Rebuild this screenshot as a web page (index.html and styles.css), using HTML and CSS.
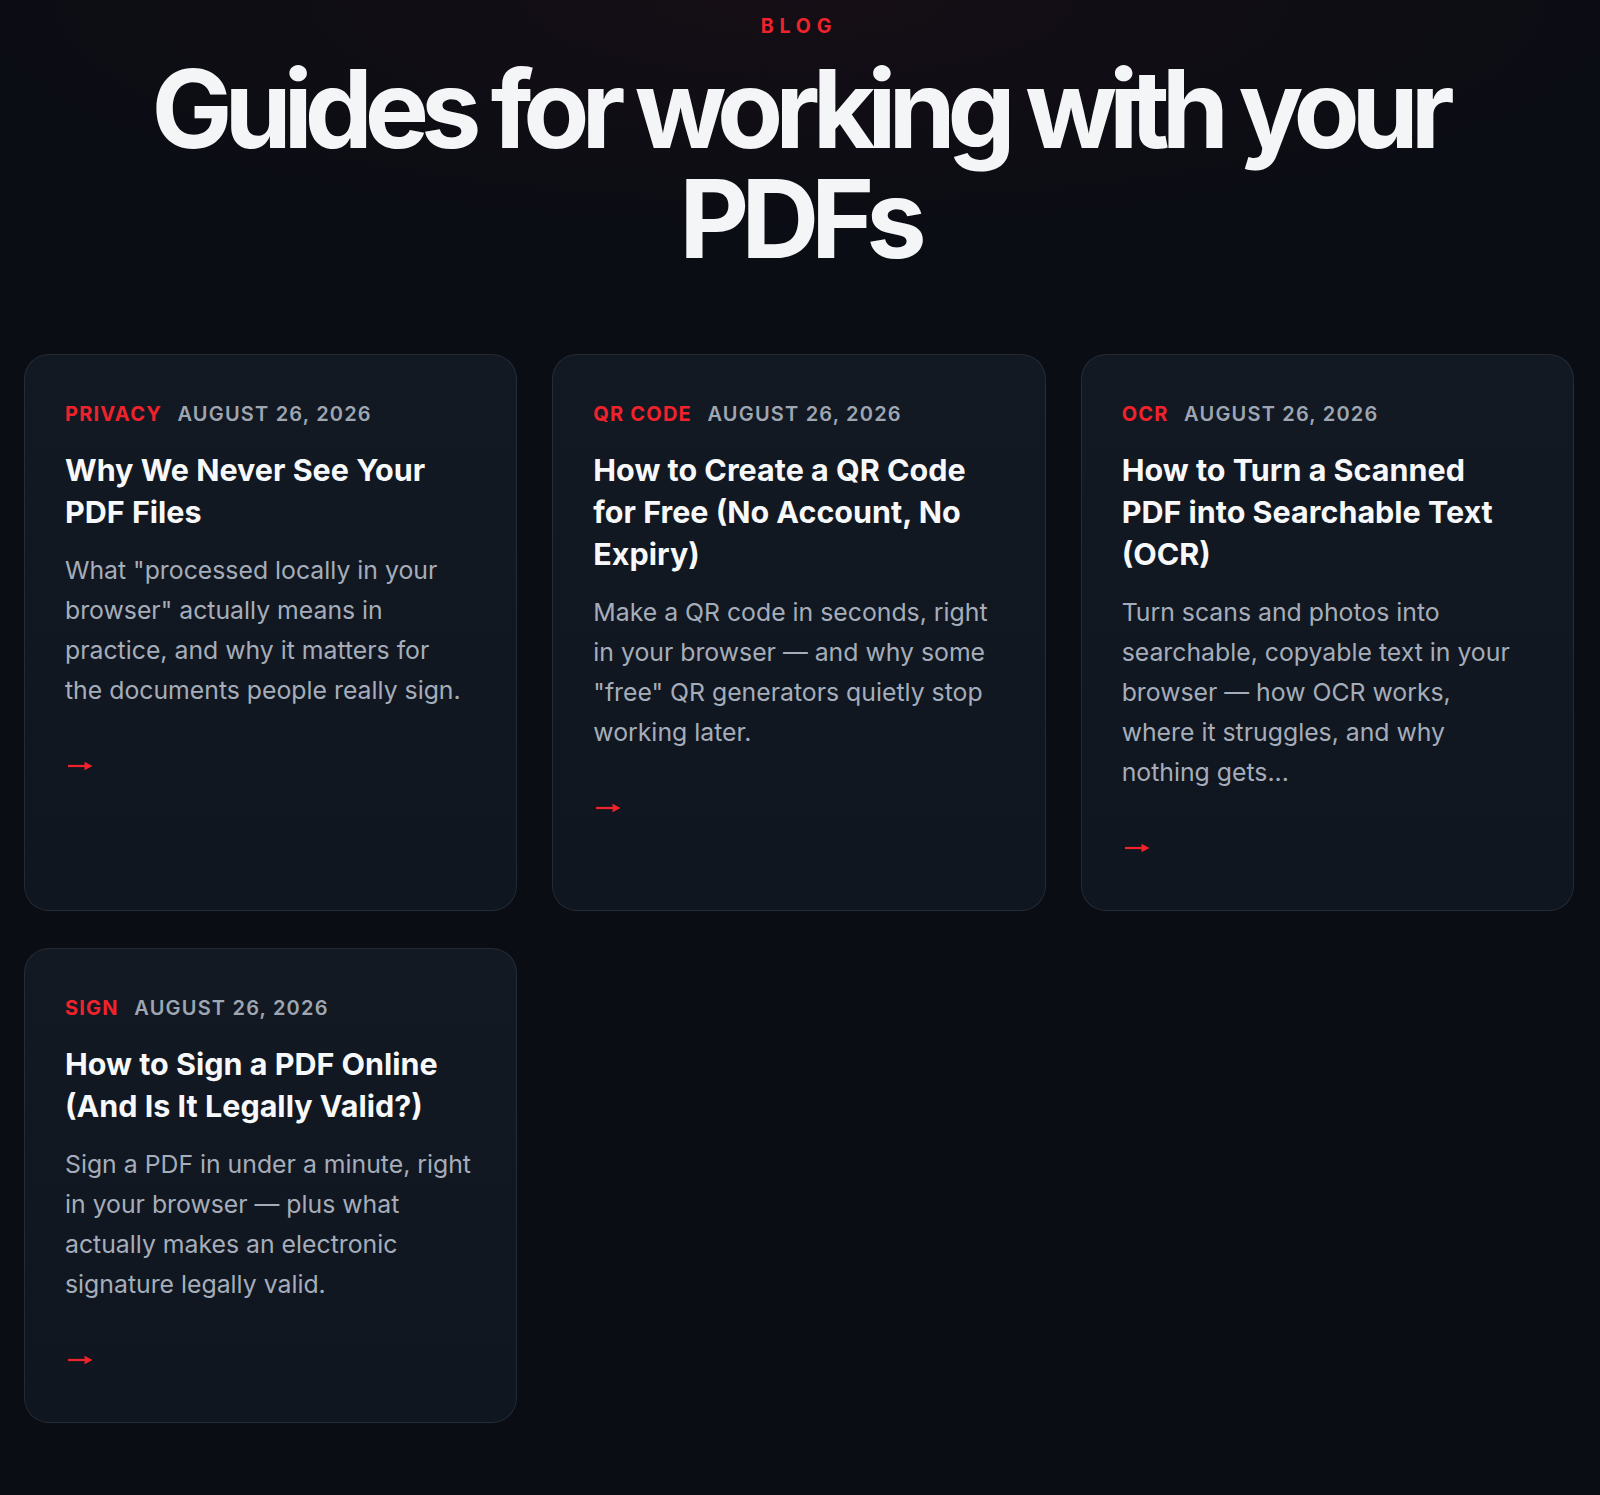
FILE: index.html
```html
<!DOCTYPE html>
<html lang="en">
<head>
<meta charset="utf-8">
<title>Blog — Guides for working with your PDFs</title>
<link rel="stylesheet" href="styles.css">
</head>
<body>
<main class="page">
  <header class="hero">
    <p class="eyebrow">Blog</p>
    <h1 class="hero-title">Guides for working with your PDFs</h1>
  </header>

  <section class="posts">
    <article class="card">
      <div class="meta"><span class="tag">Privacy</span><span class="date">August 26, 2026</span></div>
      <h2 class="card-title">Why We Never See Your PDF Files</h2>
      <p class="card-text">What "processed locally in your browser" actually means in practice, and why it matters for the documents people really sign.</p>
      <div class="more"><svg class="arrow" viewBox="0 0 25 12" width="25" height="12" aria-hidden="true"><path d="M0 6H19" stroke="currentColor" stroke-width="2.2" fill="none"/><path d="M16.5 1.8L24.5 6L16.5 10.2Z" fill="currentColor"/></svg></div>
    </article>

    <article class="card">
      <div class="meta"><span class="tag">QR Code</span><span class="date">August 26, 2026</span></div>
      <h2 class="card-title">How to Create a QR Code for Free (No Account, No Expiry)</h2>
      <p class="card-text">Make a QR code in seconds, right in your browser — and why some "free" QR generators quietly stop working later.</p>
      <div class="more"><svg class="arrow" viewBox="0 0 25 12" width="25" height="12" aria-hidden="true"><path d="M0 6H19" stroke="currentColor" stroke-width="2.2" fill="none"/><path d="M16.5 1.8L24.5 6L16.5 10.2Z" fill="currentColor"/></svg></div>
    </article>

    <article class="card">
      <div class="meta"><span class="tag">OCR</span><span class="date">August 26, 2026</span></div>
      <h2 class="card-title">How to Turn a Scanned PDF into Searchable Text (OCR)</h2>
      <p class="card-text">Turn scans and photos into searchable, copyable text in your browser — how OCR works, where it struggles, and why nothing gets...</p>
      <div class="more"><svg class="arrow" viewBox="0 0 25 12" width="25" height="12" aria-hidden="true"><path d="M0 6H19" stroke="currentColor" stroke-width="2.2" fill="none"/><path d="M16.5 1.8L24.5 6L16.5 10.2Z" fill="currentColor"/></svg></div>
    </article>

    <article class="card">
      <div class="meta"><span class="tag">Sign</span><span class="date">August 26, 2026</span></div>
      <h2 class="card-title">How to Sign a PDF Online (And Is It Legally Valid?)</h2>
      <p class="card-text">Sign a PDF in under a minute, right in your browser — plus what actually makes an electronic signature legally valid.</p>
      <div class="more"><svg class="arrow" viewBox="0 0 25 12" width="25" height="12" aria-hidden="true"><path d="M0 6H19" stroke="currentColor" stroke-width="2.2" fill="none"/><path d="M16.5 1.8L24.5 6L16.5 10.2Z" fill="currentColor"/></svg></div>
    </article>
  </section>
</main>
</body>
</html>
```

FILE: styles.css
```css
* { box-sizing: border-box; }

html, body {
  margin: 0;
  padding: 0;
}

body {
  min-height: 1495px;
  background-color: #0a0d14;
  background-image: radial-gradient(ellipse 60% 260px at 50% 0, rgba(120, 20, 30, 0.10), rgba(10, 13, 20, 0) 100%);
  background-repeat: no-repeat;
  color: #f4f5f7;
  font-family: Inter, "Noto Sans", "Liberation Sans", sans-serif;
}

.page {
  padding: 0 26px 72px 24px;
}

.hero {
  text-align: center;
  padding-top: 13px;
}

.eyebrow {
  margin: 0;
  font-size: 19.5px;
  line-height: 26px;
  font-weight: 700;
  letter-spacing: 0.3em;
  text-transform: uppercase;
  color: #f0222c;
}

.hero-title {
  margin: 15px auto 0;
  max-width: 1400px;
  font-size: 108px;
  line-height: 110px;
  font-weight: 700;
  letter-spacing: -0.075em;
  color: #f4f5f7;
}

.posts {
  margin-top: 80px;
  display: grid;
  grid-template-columns: repeat(3, 1fr);
  column-gap: 35px;
  row-gap: 37px;
  align-items: stretch;
}

.card {
  border: 1.25px solid rgba(255, 255, 255, 0.085);
  border-radius: 25px;
  background: linear-gradient(180deg, #131923 0%, #10161f 100%);
  padding: 40px;
}

.meta {
  margin-top: 6px;
  display: flex;
  gap: 15.5px;
  font-size: 20px;
  line-height: 26px;
  letter-spacing: 0.06em;
  text-transform: uppercase;
}

.tag {
  font-weight: 700;
  color: #f0222c;
}

.date {
  font-weight: 600;
  color: #9ea6b2;
}

.card-title {
  margin: 21.5px 0 0;
  padding-right: 12px;
  font-size: 30.5px;
  line-height: 42px;
  font-weight: 700;
  letter-spacing: 0;
  color: #f7f8fa;
}

.card-text {
  margin: 17px 0 0;
  padding-right: 5px;
  font-size: 24.8px;
  line-height: 40px;
  font-weight: 400;
  color: #a5adba;
}

.more {
  margin-top: 33.5px;
  height: 45px;
  display: flex;
  align-items: center;
  padding-left: 3px;
  color: #f0222c;
}

.arrow {
  display: block;
}
```
